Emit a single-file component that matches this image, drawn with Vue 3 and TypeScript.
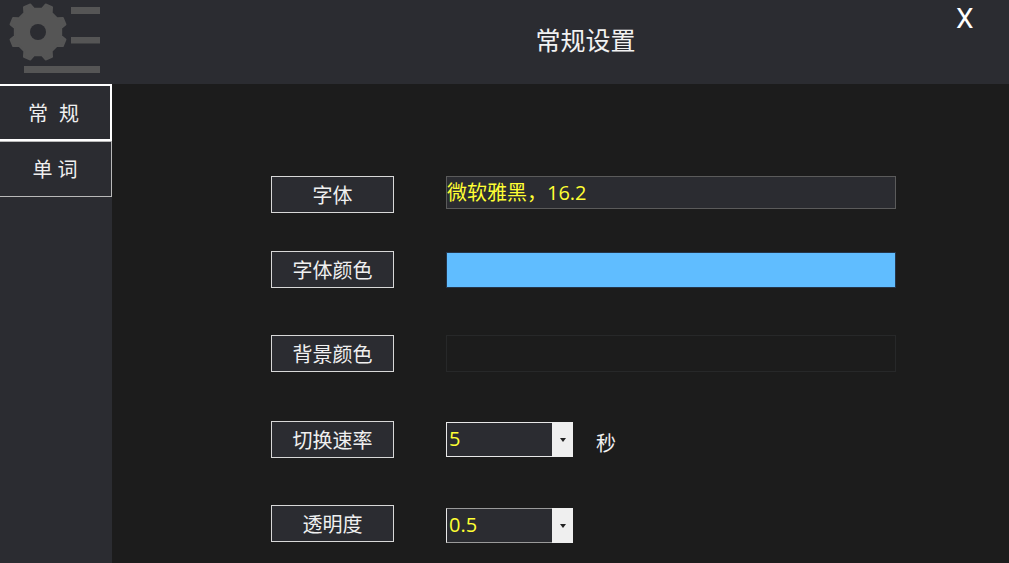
<script setup lang="ts">
const cx = 38
const cy = 32
function gearPath(): string {
  const pts: string[] = []
  const teeth = 8
  for (let i = 0; i < teeth; i++) {
    const a = ((i + 0.5) * 360) / teeth
    const spec: [number, number][] = [
      [-13, 23.5],
      [-7, 28.5],
      [7, 28.5],
      [13, 23.5],
    ]
    for (const [d, r] of spec) {
      const t = ((a + d) * Math.PI) / 180
      pts.push(`${(cx + r * Math.cos(t)).toFixed(2)} ${(cy + r * Math.sin(t)).toFixed(2)}`)
    }
  }
  return 'M' + pts.join('L') + 'Z'
}
const gear = gearPath()
</script>

<template>
  <div class="app">
    <header class="top">
      <div class="logo">
        <svg width="112" height="84" viewBox="0 0 112 84" aria-hidden="true">
          <path :d="gear" fill="#555" stroke="#555" stroke-width="2" stroke-linejoin="round" />
          <circle :cx="cx" :cy="cy" r="8" fill="#2b2c31" />
          <rect x="71" y="7" width="29" height="7" fill="#555" />
          <rect x="71" y="37" width="29" height="6.5" fill="#555" />
          <rect x="24" y="66" width="76" height="7" fill="#555" />
        </svg>
      </div>
      <h1 class="title">常规设置</h1>
      <div class="close">X</div>
    </header>
    <div class="body">
      <nav class="side">
        <div class="tab tab-on">常 规</div>
        <div class="tab">单 词</div>
      </nav>
      <main class="form">
        <div class="row row-font">
          <div class="label">字体</div>
          <div class="field field-text">微软雅黑，16.2</div>
        </div>
        <div class="row row-color">
          <div class="label">字体颜色</div>
          <div class="field field-blue"></div>
        </div>
        <div class="row row-bg">
          <div class="label">背景颜色</div>
          <div class="field field-dark"></div>
        </div>
        <div class="row row-rate">
          <div class="label">切换速率</div>
          <div class="select">
            <span class="value">5</span>
            <span class="arrow"><i></i></span>
          </div>
          <span class="unit">秒</span>
        </div>
        <div class="row row-alpha">
          <div class="label">透明度</div>
          <div class="select select-alpha">
            <span class="value">0.5</span>
            <span class="arrow"><i></i></span>
          </div>
        </div>
      </main>
    </div>
  </div>
</template>

<style>
html, body { margin: 0; background: #1c1c1c; overflow: hidden; }
</style>

<style scoped>
.app {
  width: 1009px;
  height: 563px;
  display: flex;
  flex-direction: column;
  overflow: hidden;
  background: #1c1c1c;
  color: #f0f0f0;
  font-family: "Open Sans", "Noto Sans CJK SC", sans-serif;
}
.top {
  height: 84px;
  flex: none;
  background: #2b2c31;
  display: flex;
  position: relative;
  justify-content: center;
}
.logo { position: absolute; left: 0; top: 0; height: 84px; }
.logo svg { display: block; }
.title {
  margin: 0;
  font-size: 25px;
  font-weight: 400;
  line-height: 80px;
  transform: translateX(81px);
  color: #f2f2f2;
}
.close {
  position: absolute;
  left: 956px;
  top: 2px;
  font-family: Roboto, sans-serif;
  font-size: 28px;
  line-height: 34px;
  color: #fff;
}
.body { flex: 1; display: flex; min-height: 0; }
.side { width: 112px; flex: none; background: #2b2c31; }
.tab {
  box-sizing: border-box;
  height: 56px;
  width: 112px;
  border: 1px solid #b9b9b9;
  border-left: none;
  text-align: center;
  font-size: 20px;
  line-height: 56px;
  color: #efefef;
  padding-right: 1px;
}
.tab-on {
  height: 57px;
  border: 2px solid #fff;
  border-left: none;
  word-spacing: 6px;
  line-height: 55px;
  padding-right: 3px;
}
.form { flex: 1; padding: 92px 0 0 159px; display: flex; flex-direction: column; }
.row { display: flex; align-items: flex-start; }
.row-color { margin-top: 38px; }
.row-bg { margin-top: 47px; }
.row-rate { margin-top: 49px; }
.row-alpha { margin-top: 47px; }
.label {
  box-sizing: border-box;
  width: 123px;
  height: 37px;
  border: 1px solid #d8d8d8;
  background: #2b2c31;
  text-align: center;
  font-size: 20px;
  line-height: 37px;
  color: #f0f0f0;
  flex: none;
}
.field { box-sizing: border-box; width: 450px; margin-left: 52px; }
.field-text {
  height: 33px;
  border: 1px solid #5b5b5b;
  background: #2b2c31;
  color: #ffff33;
  font-size: 20px;
  line-height: 32px;
  white-space: nowrap;
}
.field-blue { height: 36px; margin-top: 1px; border: 1px solid #24354a; background: #60bdff; }
.field-dark { height: 37px; border: 1px solid #272829; background: #1c1c1c; }
.select {
  box-sizing: border-box;
  width: 127px;
  height: 35px;
  margin-left: 52px;
  margin-top: 1px;
  display: flex;
  border: 1px solid #e8e8e8;
  background: #2b2c31;
}
.select-alpha { margin-top: 3px; border-top-color: #9a9a9a; border-bottom-color: #9a9a9a; }
.value {
  flex: 1;
  font-size: 20px;
  line-height: 31px;
  color: #ffff33;
  padding-left: 2px;
}
.arrow {
  width: 21px;
  background: #efefef;
  margin: -1px -1px -1px 0;
  flex: none;
  display: flex;
  align-items: center;
  justify-content: center;
}
.arrow i {
  width: 0;
  height: 0;
  border-left: 3.5px solid transparent;
  border-right: 3.5px solid transparent;
  border-top: 4px solid #222;
}
.unit { margin-left: 23px; font-size: 20px; height: 37px; line-height: 46px; color: #f0f0f0; }
</style>
